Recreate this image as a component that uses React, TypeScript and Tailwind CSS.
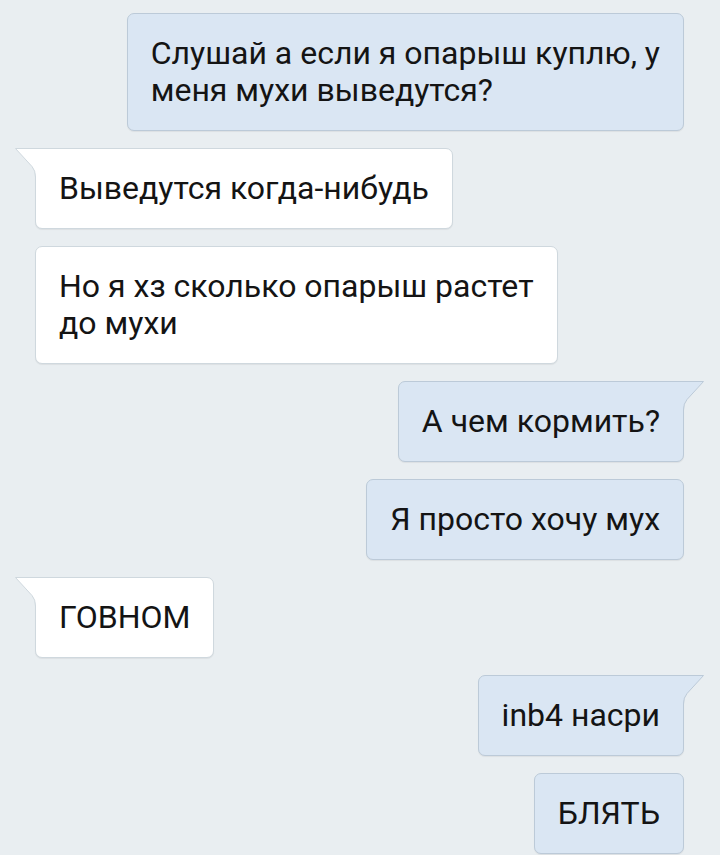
import React from 'react';

type Side = 'in' | 'out';

interface Msg {
  side: Side;
  lines: string[];
  tail?: boolean;
}

const messages: Msg[] = [
  { side: 'out', lines: ['Слушай а если я опарыш куплю, у', 'меня мухи выведутся?'] },
  { side: 'in', lines: ['Выведутся когда-нибудь'], tail: true },
  { side: 'in', lines: ['Но я хз сколько опарыш растет', 'до мухи'] },
  { side: 'out', lines: ['А чем кормить?'], tail: true },
  { side: 'out', lines: ['Я просто хочу мух'] },
  { side: 'in', lines: ['ГОВНОМ'], tail: true },
  { side: 'out', lines: ['inb4 насри'], tail: true },
  { side: 'out', lines: ['БЛЯТЬ'] },
];

// little corner tail drawn over the bubble's top corner
const Tail = ({ side }: { side: Side }) => {
  const fill = side === 'out' ? '#dae6f3' : '#ffffff';
  const stroke = side === 'out' ? '#bccad8' : '#cfd8de';
  return (
    <svg
      width="23"
      height="30"
      viewBox="0 0 23 30"
      className={
        side === 'in'
          ? 'absolute -left-[21px] -top-px'
          : 'absolute -right-[21px] -top-px -scale-x-100'
      }
    >
      <path d="M0.5 0.5 L23 0.5 L23 29 L20.5 29 Q20.5 22.5 17 18.5 Z" fill={fill} />
      <path
        d="M23 0.5 L0.5 0.5 L17 18.5 Q20.5 22.5 20.5 29"
        fill="none"
        stroke={stroke}
        strokeWidth="1"
      />
    </svg>
  );
};

const Bubble = ({ msg }: { msg: Msg }) => {
  const out = msg.side === 'out';
  return (
    <div
      className={[
        'relative w-fit rounded-[7px] border px-[23px] py-[21px] text-[32px] leading-[37px] text-[#141414] shadow-[0_1px_1px_rgba(0,0,0,0.06)]',
        out ? 'self-end bg-[#dae6f3] border-[#bccad8]' : 'self-start bg-white border-[#cfd8de]',
        msg.tail ? (out ? 'rounded-tr-none' : 'rounded-tl-none') : '',
      ].join(' ')}
    >
      {msg.tail && <Tail side={msg.side} />}
      {msg.lines.map((l, i) => (
        <div key={i} className="whitespace-nowrap">
          {l}
        </div>
      ))}
    </div>
  );
};

export default function App() {
  return (
    <div
      className="flex min-h-[855px] w-[720px] flex-col gap-[17px] overflow-hidden bg-[#e9eef1] pl-[35px] pr-[36px] pt-[13px]"
      style={{ fontFamily: 'Roboto, "Noto Sans", sans-serif' }}
    >
      {messages.map((m, i) => (
        <Bubble key={i} msg={m} />
      ))}
    </div>
  );
}
